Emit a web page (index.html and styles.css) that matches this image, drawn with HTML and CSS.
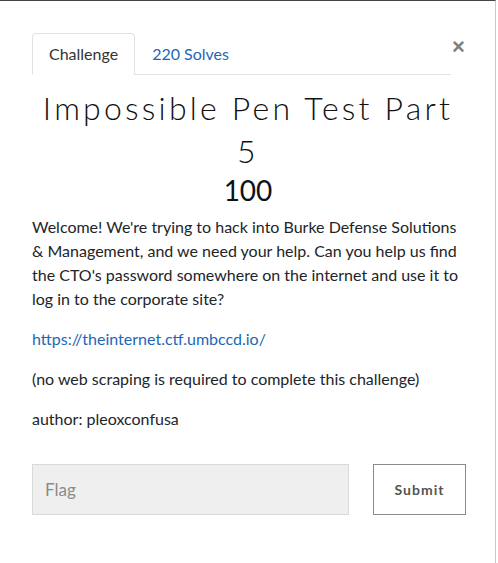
FILE: index.html
```html
<!DOCTYPE html>
<html lang="en">
<head>
  <meta charset="UTF-8" />
  <meta name="viewport" content="width=device-width, initial-scale=1.0"/>
  <title>Impossible Pen Test Part 5</title>
  <link rel="stylesheet" href="styles.css">
</head>
<body>
  <div class="modal">
    <div class="modal-body">
      <div class="tab-row">
        <ul class="nav-tabs">
          <li><a href="#challenge" class="active">Challenge</a></li>
          <li><a href="#solves">220 Solves</a></li>
        </ul>
        <button type="button" class="close">&times;</button>
      </div>

      <h2 class="challenge-name">Impossible Pen Test Part 5</h2>
      <h3 class="challenge-value">100</h3>

      <div class="challenge-desc">
        <p>Welcome! We're trying to hack into Burke Defense Solutions &amp; Management, and we need your help. Can you help us find the CTO's password somewhere on the internet and use it to log in to the corporate site?</p>
        <p><a href="#">https://theinternet.ctf.umbccd.io/</a></p>
        <p>(no web scraping is required to complete this challenge)</p>
        <p>author: pleoxconfusa</p>
      </div>

      <form class="flag-row" onsubmit="event.preventDefault();">
        <input type="text" class="flag-input" placeholder="Flag" />
        <button type="submit" class="submit-btn">Submit</button>
      </form>
    </div>
  </div>
</body>
</html>
```

FILE: styles.css
```css
body {
  margin: 0;
  font-family: Lato, "Open Sans", sans-serif;
  background: #fff;
  color: #212529;
}

.modal {
  width: 495px;
  min-height: 562px;
  border-top: 1px solid #444;
  border-right: 1px solid #c8c8c8;
}

.modal-body {
  padding: 32px 31px 0 32px;
}

.tab-row {
  display: flex;
  align-items: flex-start;
}

.nav-tabs {
  flex: 1;
  display: flex;
  list-style: none;
  margin: 0;
  padding: 0;
  border-bottom: 1px solid #dee2e6;
}

.nav-tabs li {
  margin-bottom: -1px;
}

.nav-tabs a {
  display: block;
  padding: 8px 16px;
  font-size: 16px;
  line-height: 24px;
  color: #1d67b7;
  text-decoration: none;
  border: 1px solid transparent;
  border-radius: 4px 4px 0 0;
}

.nav-tabs a.active {
  color: #333;
  background: #fff;
  border-color: #dee2e6 #dee2e6 #fff;
}

.close {
  width: 12px;
  margin: 2px 0 0 1px;
  padding: 0;
  border: none;
  background: none;
  font-family: "Liberation Sans", sans-serif;
  font-size: 22px;
  font-weight: 700;
  line-height: 24px;
  color: #808080;
  cursor: pointer;
}

.challenge-name {
  margin: 11px 0 0;
  font-size: 32px;
  font-weight: 300;
  line-height: 43px;
  letter-spacing: 3.2px;
  text-align: center;
  color: #111;
}

.challenge-value {
  margin: 2px 0 7px;
  font-size: 28px;
  font-weight: 400;
  line-height: 1.2;
  text-align: center;
  color: #111;
}

.challenge-desc p {
  margin: 0 0 16px;
  font-size: 16px;
  line-height: 24px;
}

.challenge-desc p:last-child {
  margin-bottom: 0;
}

.challenge-desc a {
  color: #1d67b7;
  text-decoration: none;
}

.flag-row {
  display: flex;
  gap: 24px;
  margin: 33px -2px 0 0;
}

.flag-input {
  width: 317px;
  height: 51px;
  box-sizing: border-box;
  padding: 0 12px;
  border: 1px solid #d9d9d9;
  background: #efefef;
  font-family: Lato, sans-serif;
  font-size: 17px;
  color: #333;
  outline: none;
}

.flag-input::placeholder {
  color: #8a8a8a;
}

.submit-btn {
  width: 93px;
  height: 51px;
  box-sizing: border-box;
  border: 1px solid #8a8a8a;
  background: #fff;
  font-family: Lato, sans-serif;
  font-size: 14px;
  font-weight: 700;
  letter-spacing: 1px;
  color: #555;
  cursor: pointer;
}
```
